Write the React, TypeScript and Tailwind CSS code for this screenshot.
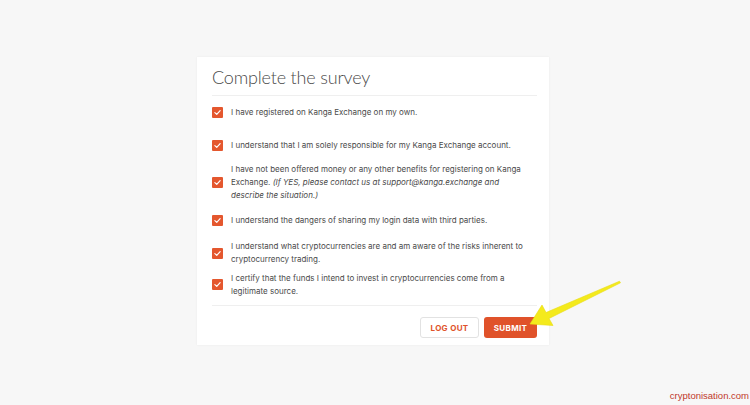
import React from "react";

type Item = {
  lines: React.ReactNode[];
  h: string;
};

const items: Item[] = [
  { lines: ["I have registered on Kanga Exchange on my own."], h: "h-[33px]" },
  { lines: ["I understand that I am solely responsible for my Kanga Exchange account."], h: "h-[33px]" },
  {
    lines: [
      "I have not been offered money or any other benefits for registering on Kanga",
      <>
        Exchange. <i>(If YES, please contact us at support@kanga.exchange and</i>
      </>,
      <i>describe the situation.)</i>,
    ],
    h: "h-[40px]",
  },
  { lines: ["I understand the dangers of sharing my login data with third parties."], h: "h-[37px]" },
  {
    lines: [
      "I understand what cryptocurrencies are and am aware of the risks inherent to",
      "cryptocurrency trading.",
    ],
    h: "h-[28px]",
  },
  {
    lines: [
      "I certify that the funds I intend to invest in cryptocurrencies come from a",
      "legitimate source.",
    ],
    h: "h-[35px]",
  },
];

function Check() {
  return (
    <span className="flex h-[11px] w-[11px] shrink-0 items-center justify-center rounded-[1px] bg-[#e4572e]">
      <svg viewBox="0 0 12 12" className="h-[9px] w-[9px]" fill="none">
        <path d="M2.5 6.2 5 8.5 9.5 3.5" stroke="#fff" strokeWidth="1.6" strokeLinecap="round" strokeLinejoin="round" />
      </svg>
    </span>
  );
}

export default function App() {
  return (
    <div className="relative h-[405px] w-[750px] overflow-hidden bg-[#f7f7f7] font-['Inter',sans-serif]">
      <div className="ml-[197px] mt-[57px] w-[352px] bg-white pl-[15px] pr-[12px] shadow-[0_0_2px_rgba(0,0,0,0.06)]">
        <div className="h-[39px] border-b border-[#efefef] pt-[8px]">
          <h1 className="font-['Lato',sans-serif] text-[18px] font-light leading-[24px] tracking-[-0.01em] text-[#4a4a4a]">
            Complete the survey
          </h1>
        </div>

        <div className="flex flex-col">
          {items.map((it, i) => (
            <div key={i} className={`flex items-center gap-[8px] ${it.h}`}>
              <Check />
              <div className="text-[8px] leading-[13px] text-[#4a4a4a]">
                {it.lines.map((l, j) => (
                  <div key={j} className="whitespace-nowrap">
                    {l}
                  </div>
                ))}
              </div>
            </div>
          ))}
        </div>

        <div className="mt-[3px] flex justify-end gap-[5px] border-t border-[#efefef] pb-[7px] pt-[11px]">
          <button className="h-[21px] w-[59px] rounded-[3px] border border-[#e2e2e2] bg-white text-[8px] font-bold tracking-[0.04em] text-[#e0522a]">
            LOG OUT
          </button>
          <button className="h-[21px] w-[53px] rounded-[3px] bg-[#e0522a] text-[8px] font-bold tracking-[0.04em] text-white">
            SUBMIT
          </button>
        </div>
      </div>

      <svg className="absolute left-[520px] top-[275px]" width="110" height="60" viewBox="0 0 110 60">
        <polygon
          points="10,49 33,50.5 29,43.5 100.5,7.8 99.5,6.2 26,37.5 22,30"
          fill="#f4ea1c"
          stroke="#e8dc10"
          strokeWidth="0.6"
          strokeLinejoin="round"
        />
      </svg>

      <div className="absolute bottom-[2px] right-[1px] font-['Liberation_Sans',sans-serif] text-[9.5px] text-[#c0392b]">
        cryptonisation.com
      </div>
    </div>
  );
}
